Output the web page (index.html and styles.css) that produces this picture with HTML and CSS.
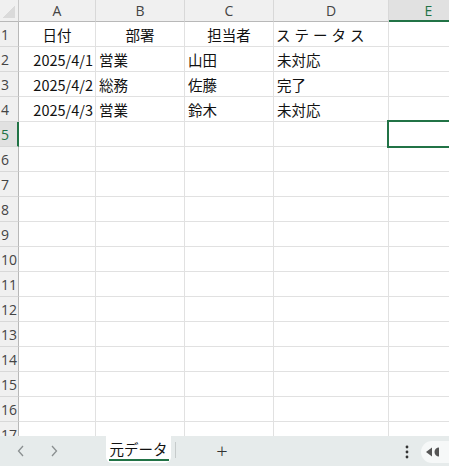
FILE: index.html
```html
<!DOCTYPE html>
<html lang="ja">
<head>
<meta charset="utf-8">
<link rel="stylesheet" href="styles.css">
</head>
<body>
<div class="app">
  <div class="sheet">
    <div class="grid">
      <div class="corner"><span class="tri"></span></div>
      <div class="ch">A</div><div class="ch">B</div><div class="ch">C</div><div class="ch">D</div><div class="ch sel">E</div>

      <div class="rh">1</div><div class="c ctr">日付</div><div class="c ctr">部署</div><div class="c ctr">担当者</div><div class="c ctr wide">ステータス</div><div class="c"></div>
      <div class="rh">2</div><div class="c num">2025/4/1</div><div class="c">営業</div><div class="c">山田</div><div class="c">未対応</div><div class="c"></div>
      <div class="rh">3</div><div class="c num">2025/4/2</div><div class="c">総務</div><div class="c">佐藤</div><div class="c">完了</div><div class="c"></div>
      <div class="rh">4</div><div class="c num">2025/4/3</div><div class="c">営業</div><div class="c">鈴木</div><div class="c">未対応</div><div class="c"></div>
      <div class="rh sel">5</div><div class="c"></div><div class="c"></div><div class="c"></div><div class="c"></div><div class="c active"></div>
      <div class="rh">6</div><div class="c"></div><div class="c"></div><div class="c"></div><div class="c"></div><div class="c"></div>
      <div class="rh">7</div><div class="c"></div><div class="c"></div><div class="c"></div><div class="c"></div><div class="c"></div>
      <div class="rh">8</div><div class="c"></div><div class="c"></div><div class="c"></div><div class="c"></div><div class="c"></div>
      <div class="rh">9</div><div class="c"></div><div class="c"></div><div class="c"></div><div class="c"></div><div class="c"></div>
      <div class="rh">10</div><div class="c"></div><div class="c"></div><div class="c"></div><div class="c"></div><div class="c"></div>
      <div class="rh">11</div><div class="c"></div><div class="c"></div><div class="c"></div><div class="c"></div><div class="c"></div>
      <div class="rh">12</div><div class="c"></div><div class="c"></div><div class="c"></div><div class="c"></div><div class="c"></div>
      <div class="rh">13</div><div class="c"></div><div class="c"></div><div class="c"></div><div class="c"></div><div class="c"></div>
      <div class="rh">14</div><div class="c"></div><div class="c"></div><div class="c"></div><div class="c"></div><div class="c"></div>
      <div class="rh">15</div><div class="c"></div><div class="c"></div><div class="c"></div><div class="c"></div><div class="c"></div>
      <div class="rh">16</div><div class="c"></div><div class="c"></div><div class="c"></div><div class="c"></div><div class="c"></div>
      <div class="rh">17</div><div class="c"></div><div class="c"></div><div class="c"></div><div class="c"></div><div class="c"></div>
    </div>
  </div>
  <div class="tabbar">
    <div class="navs">
      <svg class="nav" width="10" height="14" viewBox="0 0 10 14"><path d="M7 2 L2.5 7 L7 12" fill="none" stroke="#8a8f90" stroke-width="1.3"/></svg>
      <svg class="nav" width="10" height="14" viewBox="0 0 10 14"><path d="M3 2 L7.5 7 L3 12" fill="none" stroke="#8a8f90" stroke-width="1.3"/></svg>
    </div>
    <div class="tab"><span class="tablabel">元データ</span></div>
    <div class="tabsep"></div>
    <div class="add">+</div>
    <div class="spacer"></div>
    <svg class="more" width="4" height="14" viewBox="0 0 4 14"><circle cx="2" cy="2" r="1.4" fill="#333"/><circle cx="2" cy="7" r="1.4" fill="#333"/><circle cx="2" cy="12" r="1.4" fill="#333"/></svg>
    <div class="scrollbtn">
      <svg width="20" height="12" viewBox="0 0 20 12"><path d="M1 6 L7 1.5 L7 10.5 Z" fill="#555"/><path d="M14 1.5 A4.5 4.5 0 0 0 14 10.5 Z" fill="#555"/></svg>
    </div>
  </div>
</div>
</body>
</html>
```

FILE: styles.css
```css
html, body {
  margin: 0;
  padding: 0;
  background: #ffffff;
}
.app {
  width: 449px;
  height: 466px;
  display: flex;
  flex-direction: column;
  overflow: hidden;
}
.sheet {
  height: 436px;
  overflow: hidden;
  flex: none;
}
.grid {
  display: grid;
  grid-template-columns: 19px 77px 89px 89px 115px 80px;
  grid-auto-rows: 25px;
  grid-template-rows: 22px;
  font-family: "Noto Sans CJK JP", sans-serif;
  font-size: 14.5px;
  color: #111;
}
.corner {
  background: #f0f0f0;
  border-right: 1px solid #c8c8c8;
  border-bottom: 1px solid #b8b8b8;
  position: relative;
}
.tri {
  position: absolute;
  right: 3px;
  bottom: 3px;
  width: 13px;
  height: 13px;
  background: linear-gradient(to bottom right, transparent 50%, #dadada 50%);
}
.ch {
  background: #f0f0f0;
  border-right: 1px solid #d8d8d8;
  border-bottom: 1px solid #b8b8b8;
  display: flex;
  align-items: center;
  justify-content: center;
  font-family: "Open Sans", "Noto Sans", sans-serif;
  font-size: 14px;
  color: #444;
}
.ch.sel {
  background: #e1e1e1;
  color: #217346;
  border-bottom: 2px solid #217346;
  border-right-color: #c8c8c8;
}
.rh {
  background: #f0f0f0;
  border-right: 1px solid #b8b8b8;
  border-bottom: 1px solid #d8d8d8;
  display: flex;
  align-items: center;
  padding-left: 1px;
  overflow: hidden;
  font-family: "Open Sans", "Noto Sans", sans-serif;
  font-size: 14px;
  color: #444;
  white-space: nowrap;
}
.rh.sel {
  background: #e1e1e1;
  color: #217346;
  border-right: 2px solid #217346;
}
.c {
  border-right: 1px solid #e1e1e1;
  border-bottom: 1px solid #e1e1e1;
  display: flex;
  align-items: center;
  padding: 0 3px;
  white-space: nowrap;
  overflow: visible;
  min-width: 0;
}
.c.ctr {
  justify-content: center;
}
.c.num {
  justify-content: flex-end;
  padding-right: 2px;
}
.c.wide {
  letter-spacing: 4px;
  justify-content: flex-start;
  padding-left: 2px;
}
.c.active {
  position: relative;
}
.c.active::after {
  content: "";
  position: absolute;
  left: -2px;
  top: -2px;
  right: -1px;
  bottom: -2px;
  border: 2px solid #217346;
}
.tabbar {
  flex: none;
  height: 30px;
  background: #e6ebeb;
  display: flex;
  align-items: stretch;
  font-family: "Noto Sans CJK JP", sans-serif;
}
.navs {
  width: 106px;
  display: flex;
  align-items: center;
  gap: 23px;
  padding-left: 16px;
  box-sizing: border-box;
}
.tab {
  width: 65px;
  background: #ffffff;
  border-radius: 0 0 6px 6px;
  margin-bottom: 3px;
  display: flex;
  align-items: center;
  justify-content: center;
}
.tablabel {
  font-size: 14.5px;
  color: #111;
  border-bottom: 2px solid #217346;
  line-height: 18px;
  padding: 0 1px 1px;
  margin-top: 2px;
}
.tabsep {
  width: 1px;
  background: #c6cbcb;
  margin: 6px 0 8px 4px;
}
.add {
  width: 92px;
  display: flex;
  align-items: center;
  justify-content: center;
  font-family: "Noto Sans", sans-serif;
  font-size: 20px;
  color: #333;
  font-weight: 300;
  padding-bottom: 2px;
}
.spacer {
  flex: 1;
}
.more {
  align-self: center;
  margin-right: 12px;
  margin-top: 2px;
}
.scrollbtn {
  align-self: center;
  width: 24px;
  height: 22px;
  background: #f6f8f8;
  border-radius: 11px 0 0 11px;
  display: flex;
  align-items: center;
  padding-left: 4px;
  margin-top: 2px;
}
```
